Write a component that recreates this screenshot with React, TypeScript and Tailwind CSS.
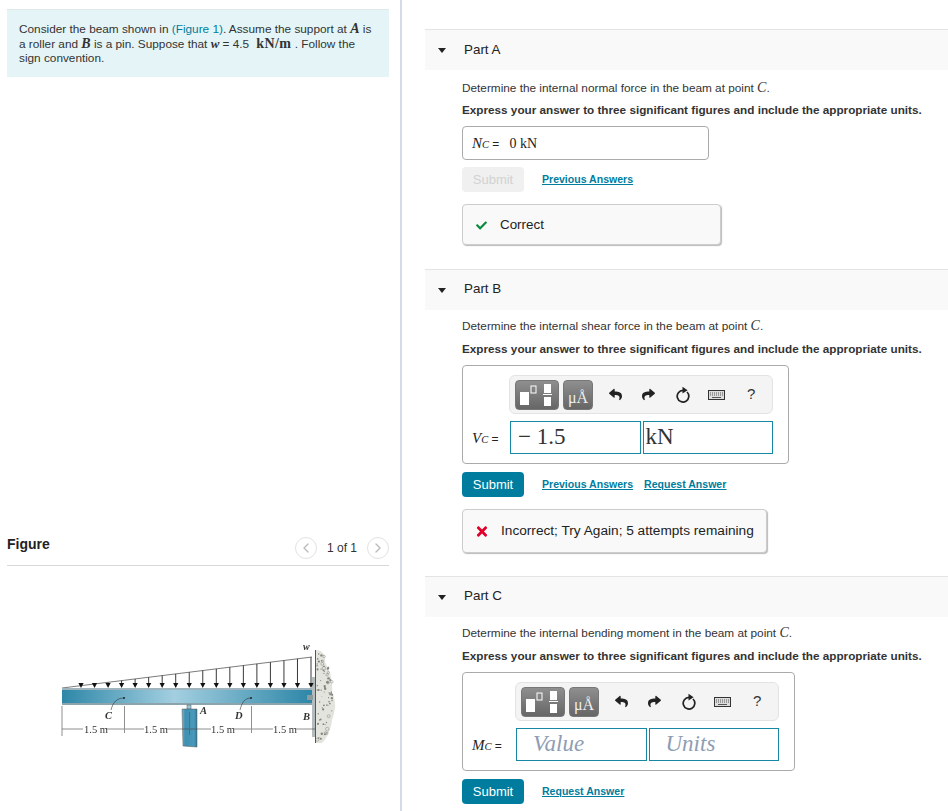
import type { ReactNode } from 'react';
import { ChevronLeft, ChevronRight } from 'lucide-react';
import { FaCheck, FaReply, FaShare, FaTimes } from 'react-icons/fa';

const arrows = Array.from({ length: 18 }, (_, i) => 81 + 13.53 * i);
const rand = (n: number) => {
  const v = Math.sin(n * 12.9898) * 43758.5453;
  return v - Math.floor(v);
};
const specks = Array.from({ length: 75 }, (_, i) => {
  const y = 654 + rand(i + 1) * 86;
  const edge = 325 + 9 * Math.sin(((y - 650) / 95) * Math.PI);
  return { x: 317 + rand(i + 101) * (edge - 318), y, r: 0.4 + rand(i + 201) * 0.8, ring: i % 6 === 0 };
});

function BeamFigure() {
  return (
    <svg width="290" height="110" viewBox="50 640 290 110" className="blur-[0.4px]">
      <defs>
        <linearGradient id="beam" x1="0" x2="1" y1="0" y2="0">
          <stop offset="0" stopColor="#2e87a8" />
          <stop offset="0.45" stopColor="#a3cfe0" />
          <stop offset="1" stopColor="#2d86a8" />
        </linearGradient>
        <linearGradient id="roller" x1="0" x2="1" y1="0" y2="0">
          <stop offset="0" stopColor="#7db8d0" />
          <stop offset="0.2" stopColor="#3f8fb2" />
          <stop offset="0.8" stopColor="#4a98ba" />
          <stop offset="1" stopColor="#2e7b9c" />
        </linearGradient>
      </defs>
      {/* wall */}
      <path d="M315 650 C322 650 326 654 325 662 C331 672 333 682 332 692 C337 702 335 712 332 720 C331 730 327 738 322 743 L315 743 Z" fill="#e4e4df" />
      {specks.map((s, i) => (
        <circle key={i} cx={s.x} cy={s.y} r={s.ring ? s.r + 0.6 : s.r} fill={s.ring ? 'none' : '#85857f'} stroke={s.ring ? '#85857f' : 'none'} strokeWidth="0.5" />
      ))}
      <rect x="312" y="677" width="3" height="60" fill="#b5bcbe" />
      <line x1="315.5" y1="650" x2="315.5" y2="743" stroke="#555" strokeWidth="1" />
      {/* load */}
      <line x1="62" y1="688" x2="312" y2="657" stroke="#444" strokeWidth="0.7" />
      {arrows.map((x) => {
        const top = 688 - ((x - 62) / 250) * 31;
        return (
          <g key={x}>
            <line x1={x} y1={top} x2={x} y2="686" stroke="#222" strokeWidth="0.9" />
            <path d={`M${x - 2.6} 683 L${x + 2.6} 683 L${x} 688 Z`} fill="#111" />
          </g>
        );
      })}
      <text x="303" y="650" fontFamily="Liberation Serif, serif" fontStyle="italic" fontWeight="bold" fontSize="10" fill="#333">w</text>
      {/* beam */}
      <rect x="62" y="688" width="250" height="17" fill="url(#beam)" />
      <rect x="62" y="688" width="250" height="2" fill="#9fb4bd" />
      <rect x="62" y="703" width="250" height="2" fill="#8ea4ad" />
      <rect x="307" y="695" width="6" height="5" fill="#8d9a9e" />
      <circle cx="124" cy="698" r="1" fill="#222" />
      <circle cx="251" cy="698" r="1" fill="#222" />
      <path d="M124 698 C117 698 113 702 111 710" fill="none" stroke="#333" strokeWidth="0.6" />
      <path d="M251 698 C245 698 242 702 240 710" fill="none" stroke="#333" strokeWidth="0.6" />
      {/* roller */}
      <rect x="187" y="705" width="4" height="4" fill="#9cc9da" stroke="#555" strokeWidth="0.5" />
      <path d="M182 709 H197 V747 L183 746 Z" fill="url(#roller)" stroke="#555" strokeWidth="0.5" />
      <line x1="189.5" y1="712" x2="189.5" y2="735" stroke="#1d5a75" strokeWidth="0.5" />
      {/* dims */}
      <g stroke="#444" strokeWidth="0.6">
        <line x1="62" y1="706" x2="62" y2="736" />
        <line x1="124.5" y1="706" x2="124.5" y2="733" />
        <line x1="251.5" y1="706" x2="251.5" y2="733" />
        <line x1="62" y1="729" x2="83" y2="729" />
        <line x1="106" y1="729" x2="124" y2="729" />
        <line x1="125" y1="729" x2="144" y2="729" />
        <line x1="167" y1="729" x2="189" y2="729" />
        <line x1="190" y1="729" x2="211" y2="729" />
        <line x1="234" y1="729" x2="251" y2="729" />
        <line x1="252" y1="729" x2="273" y2="729" />
        <line x1="296" y1="729" x2="315" y2="729" />
      </g>
      <g fontFamily="Liberation Serif, serif" fontSize="10.5" fill="#333">
        <text x="84" y="733">1.5 m</text>
        <text x="144" y="733">1.5 m</text>
        <text x="211" y="733">1.5 m</text>
        <text x="273" y="733">1.5 m</text>
      </g>
      <g fontFamily="Liberation Serif, serif" fontSize="10.5" fontStyle="italic" fontWeight="bold" fill="#333">
        <text x="105" y="719">C</text>
        <text x="235" y="719">D</text>
        <text x="200" y="714">A</text>
        <text x="303" y="720">B</text>
      </g>
    </svg>
  );
}

function Toolbar() {
  return (
    <div className="flex h-[39px] w-[264px] items-center rounded-md border border-[#e3e3e3] bg-[#f4f4f4] pl-[5px]">
      <div className="flex h-[30px] w-[44px] items-center justify-center rounded-[4px] border border-[#777] bg-gradient-to-b from-[#8f8f8f] to-[#666]">
        <svg width="38" height="26" viewBox="0 0 38 26">
          <rect x="2" y="10" width="9" height="13" fill="#fff" />
          <rect x="13" y="4" width="5" height="7" fill="none" stroke="#fff" strokeWidth="1" />
          <rect x="26" y="2" width="7" height="9" fill="#fff" />
          <rect x="25" y="12" width="9" height="1" fill="#fff" />
          <rect x="26" y="15" width="7" height="9" fill="#fff" />
        </svg>
      </div>
      <div className="ml-1 flex h-[30px] w-[30px] items-end justify-center rounded-[4px] border border-[#777] bg-gradient-to-b from-[#8f8f8f] to-[#666] pb-[2px] font-['Liberation_Serif',serif] text-[16px] leading-[18px] text-[#eee]">
        μÅ
      </div>
      <FaReply className="ml-[15px] h-[13px] w-[15px] text-[#222]" />
      <FaShare className="ml-[18px] h-[13px] w-[15px] text-[#222]" />
      <svg width="16" height="17" viewBox="0 0 16 17" className="ml-[19px]" fill="none">
        <path d="M12 6 A5.8 5.8 0 1 1 8 4.4" stroke="#222" strokeWidth="1.7" />
        <path d="M7.5 0.8 L12.6 4.3 L7.5 7.6 Z" fill="#222" />
      </svg>
      <svg width="17" height="10" viewBox="0 0 17 10" className="ml-[17px]">
        <rect x="0.5" y="0.5" width="16" height="9" fill="#ddd" stroke="#333" />
        <path d="M2 3 H15 M2 5 H15" stroke="#555" strokeWidth="1" strokeDasharray="1 1" />
        <path d="M4 7.5 H13" stroke="#555" />
      </svg>
      <span className="ml-[22px] font-['Liberation_Sans',sans-serif] text-[15px] text-[#333]">?</span>
    </div>
  );
}

function Subscript({ letter }: { letter: string }) {
  return (
    <span className="whitespace-nowrap font-['Liberation_Serif',serif] text-[15px] italic text-[#222]">
      {letter}
      <span className="text-[10.5px]">C</span>
      <span className="font-['Liberation_Sans',sans-serif] text-[12px] not-italic"> =</span>
    </span>
  );
}

function AnswerBox({ letter, width, indent, inputs, labelWidth, mt }: { letter: string; width: string; indent: string; inputs: ReactNode; labelWidth: string; mt: string }) {
  return (
    <div className={`h-[99px] rounded border border-[#aaa] ${mt} ${width}`}>
      <div className={`mt-[9px] ${indent}`}>
        <Toolbar />
      </div>
      <div className="mt-[7px] flex items-center pl-[9px]">
        <div className={labelWidth}>
          <Subscript letter={letter} />
        </div>
        {inputs}
      </div>
    </div>
  );
}

function MathInput({ children, placeholder }: { children: ReactNode; placeholder?: boolean }) {
  return (
    <div className={`flex h-[33px] w-[130.5px] items-center border border-[#1787a6] font-['Liberation_Serif',serif] text-[23px] ${placeholder ? 'pl-4 italic text-[#8f9db3]' : 'pl-[2px] text-[#333]'}`}>
      {children}
    </div>
  );
}

function Part({ name, top, label, children }: { name: string; top: string; label: string; children: ReactNode }) {
  return (
    <section className={top}>
      <div className="flex h-[41px] items-center border-t border-[#e4e4e4] bg-[#f9f9f9] pl-[13px] text-[13.4px] text-[#222]">
        <span className="h-0 w-0 border-x-[4.5px] border-t-[5px] border-x-transparent border-t-[#222]" />
        <span className={`ml-[18px] ${label}`}>{name}</span>
      </div>
      <div className="pl-[37px]">{children}</div>
    </section>
  );
}

function Prompt({ kind, first, second }: { kind: string; first: string; second: string }) {
  return (
    <>
      <p className={`text-[11.8px] leading-[16px] text-[#333] ${first}`}>
        Determine the internal {kind} in the beam at point <i className="font-['Liberation_Serif',serif] text-[14px]">C</i>.
      </p>
      <p className={`whitespace-nowrap text-[11.72px] font-bold leading-[16px] text-[#333] ${second}`}>
        Express your answer to three significant figures and include the appropriate units.
      </p>
    </>
  );
}

function Links({ names, disabled, mt }: { names: string[]; disabled?: boolean; mt: string }) {
  return (
    <div className={`flex items-center ${mt}`}>
      <button className={`h-[25px] w-[62px] rounded-sm text-[13px] ${disabled ? 'bg-[#f0f0f0] text-[#d2d2d2]' : 'bg-[#007d9e] text-white'}`}>Submit</button>
      <div className="ml-[18px] flex gap-[11px] text-[10.55px] font-bold text-[#007d9e] underline">
        {names.map((n) => (
          <a key={n} href="#">{n}</a>
        ))}
      </div>
    </div>
  );
}

export default function App() {
  return (
    <div className="flex h-[811px] w-[948px] overflow-hidden bg-white font-['Liberation_Sans',sans-serif]">
      {/* Left side - problem and figure */}
      <div className="flex w-[402px] shrink-0 flex-col border-r-2 border-[#d2dbe6] pl-[7px] pr-[11px] pt-[9px]">
        <div className="h-[68px] whitespace-nowrap border-t border-[#dfe8ea] bg-[#e5f5f7] px-3 pt-[12px] text-[11.8px] leading-[14.5px] text-[#333]">
          Consider the beam shown in <span className="text-[#007d9e]">(Figure 1)</span>. Assume the support at <i className="font-['Liberation_Serif',serif] text-[14px] font-bold leading-[14px]">A</i> is
          <br />
          a roller and <i className="font-['Liberation_Serif',serif] text-[14px] font-bold leading-[14px]">B</i> is a pin. Suppose that <i className="font-['Liberation_Serif',serif] text-[13px] font-bold leading-[14px]">w</i> = 4.5 <span className="font-['Liberation_Serif',serif] text-[14px] font-bold leading-[14px] tracking-[0.4px]">&nbsp;kN/m</span> . Follow the
          <br />
          sign convention.
        </div>
        <div className="mt-[446px] flex h-[43px] items-center justify-between border-b border-[#d9d9d9] pb-[2px]">
          <span className="mt-[3px] text-[14px] font-bold text-[#222]">Figure</span>
          <div className="mt-[9px] flex items-center text-[12px] text-[#333]">
            <span className="flex h-[22px] w-[22px] items-center justify-center rounded-full border border-[#e2e2e2]">
              <ChevronLeft className="h-4 w-4 text-[#bbb]" />
            </span>
            <span className="mx-[10px]">1 of 1</span>
            <span className="flex h-[22px] w-[22px] items-center justify-center rounded-full border border-[#e2e2e2]">
              <ChevronRight className="h-4 w-4 text-[#bbb]" />
            </span>
          </div>
        </div>
        <div className="mt-[74px] pl-[43px]">
          <BeamFigure />
        </div>
      </div>

      {/* Right side - parts */}
      <div className="ml-[23px] flex-1 pt-[29px]">
        <Part name="Part A" top="" label="pt-px">
          <Prompt kind="normal force" first="mt-[10px]" second="mt-[6px]" />
          <div className="mt-[8px] flex h-[34px] w-[247px] items-center rounded border border-[#aaa] pl-[9px]">
            <Subscript letter="N" />
            <span className="ml-[10px] font-['Liberation_Serif',serif] text-[14px] text-[#222]">0 kN</span>
          </div>
          <Links names={['Previous Answers']} disabled mt="mt-[7px]" />
          <div className="mt-[12px] flex h-[41px] w-[259px] items-center rounded border border-[#ccc] bg-[#f9f9f9] pl-[12px] pt-px text-[13.4px] text-[#222] shadow-[1px_1px_1px_#bbb]">
            <FaCheck className="h-[11px] w-[13px] text-[#0a8a3e]" />
            <span className="ml-[12px]">Correct</span>
          </div>
        </Part>

        <Part name="Part B" top="mt-[24px]" label="pb-[2px]">
          <Prompt kind="shear force" first="mt-[8px]" second="mt-[7px]" />
          <AnswerBox
            letter="V"
            width="w-[327px]"
            indent="ml-[46px]"
            labelWidth="w-[38px]"
            mt="mt-[8px]"
            inputs={
              <div className="flex gap-[2px]">
                <MathInput><span className="pl-[5px]">− 1.5</span></MathInput>
                <MathInput>kN</MathInput>
              </div>
            }
          />
          <Links names={['Previous Answers', 'Request Answer']} mt="mt-[8px]" />
          <div className="mt-[12px] flex h-[44px] w-[305px] items-center whitespace-nowrap rounded border border-[#ccc] bg-[#f9f9f9] pl-[12px] pt-px text-[13.67px] text-[#222] shadow-[1px_1px_1px_#bbb]">
            <FaTimes className="h-[15px] w-[14px] text-[#e0002b]" />
            <span className="ml-[12px]">Incorrect; Try Again; 5 attempts remaining</span>
          </div>
        </Part>

        <Part name="Part C" top="mt-[23px]" label="pb-[2px]">
          <Prompt kind="bending moment" first="mt-[8px]" second="mt-[7px]" />
          <AnswerBox
            letter="M"
            width="w-[333px]"
            indent="ml-[52px]"
            labelWidth="w-[44px]"
            mt="mt-[8px]"
            inputs={
              <div className="flex gap-[2px]">
                <MathInput placeholder>Value</MathInput>
                <MathInput placeholder>Units</MathInput>
              </div>
            }
          />
          <Links names={['Request Answer']} mt="mt-[8px]" />
        </Part>
      </div>
    </div>
  );
}
